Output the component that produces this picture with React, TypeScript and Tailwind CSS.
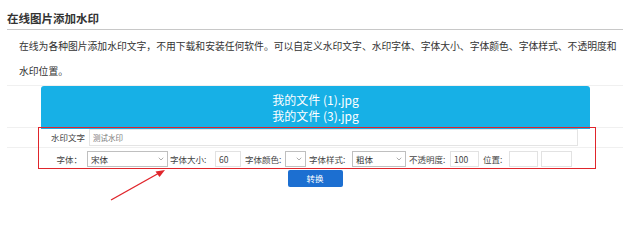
import { ChevronDown } from "lucide-react";

const cjk = { fontFamily: '"Noto Sans CJK SC", "Noto Sans", sans-serif' };

function Select({ value, className }: { value?: string; className: string }) {
  return (
    <div
      className={`flex h-[16px] items-center justify-between border border-[#bfbfbf] bg-white pl-[3px] pr-[2px] text-[8.5px] leading-none text-[#333] ${className}`}
    >
      <span>{value}</span>
      <ChevronDown className="size-[8px] text-[#666]" strokeWidth={1.6} />
    </div>
  );
}

function Field({ value, className }: { value?: string; className: string }) {
  return (
    <div
      className={`flex h-[16px] items-center border border-[#e2e2e2] bg-white pl-[3px] text-[8.5px] leading-none text-[#444] ${className}`}
    >
      {value}
    </div>
  );
}

function Label({ children, className = "" }: { children: string; className?: string }) {
  return <span className={`whitespace-nowrap text-[8.5px] leading-none text-[#444] ${className}`}>{children}</span>;
}

export default function App() {
  return (
    <div className="relative h-[242px] w-[640px] overflow-hidden bg-white" style={cjk}>
      <div className="w-[616px] pl-[7px] pt-[8px]" style={{ boxSizing: "content-box" }}>
        <h2 className="border-b border-[#c8c8c8] text-[11.5px] font-bold leading-[21px] text-[#333]">在线图片添加水印</h2>
        <p className="mt-[4px] w-[602px] pl-[12px] text-[9.8px] leading-[25px] text-[#333]" style={{ boxSizing: "content-box" }}>
          在线为各种图片添加水印文字，不用下载和安装任何软件。可以自定义水印文字、水印字体、字体大小、字体颜色、字体样式、不透明度和水印位置。
        </p>

        <div className="mt-[1px] border-t border-[#f0f0f0] leading-none">
          <div className="flex h-[42px] border-b border-[#f0f0f0] pl-[34px]">
            <div className="flex h-[43px] w-[549px] flex-col items-center rounded-t-[3px] bg-[#17b0e6] pt-[6px] text-[12px] leading-[16px] text-white">
              <span>我的文件 (1).jpg</span>
              <span>我的文件 (3).jpg</span>
            </div>
          </div>

          <div className="flex h-[20px] items-center border-b border-[#f0f0f0]">
            <div className="flex w-[78px] justify-end">
              <Label>水印文字</Label>
            </div>
            <div className="ml-[4px] flex h-[17px] w-[489px] items-center border border-[#e4e4e4] pl-[3px] text-[7.5px] text-[#777]">
              测试水印
            </div>
          </div>

          <div className="flex h-[22px] items-center">
            <div className="flex w-[75px] justify-end">
              <Label>字体：</Label>
            </div>
            <Select value="宋体" className="ml-[5px] w-[81px]" />
            <Label className="ml-[2px] w-[45px]">字体大小:</Label>
            <Field value="60" className="w-[26px]" />
            <Label className="ml-[4px] w-[40px]">字体颜色:</Label>
            <Select className="w-[21px]" />
            <Label className="ml-[3px] w-[43px]">字体样式:</Label>
            <Select value="粗体" className="w-[54px]" />
            <Label className="ml-[3px] w-[41px]">不透明度:</Label>
            <Field value="100" className="w-[29px]" />
            <Label className="ml-[4px] w-[26px]">位置:</Label>
            <Field className="w-[29px]" />
            <Field className="ml-[3px] w-[31px]" />
          </div>

          <div className="flex justify-center">
            <button className="h-[17px] w-[55px] rounded-[2px] bg-[#1c6fd1] text-[8.5px] text-white">转换</button>
          </div>
        </div>
      </div>

      <div className="pointer-events-none absolute left-[38px] top-[127px] h-[42px] w-[558px] border-[1.5px] border-[#e0252b]" />

      <svg className="pointer-events-none absolute left-0 top-0" width="640" height="242">
        <line x1="111" y1="200" x2="160" y2="172.5" stroke="#e0252b" strokeWidth="1.4" />
        <polygon points="165,170 155.5,171.5 159.5,177" fill="#e0252b" />
      </svg>
    </div>
  );
}
